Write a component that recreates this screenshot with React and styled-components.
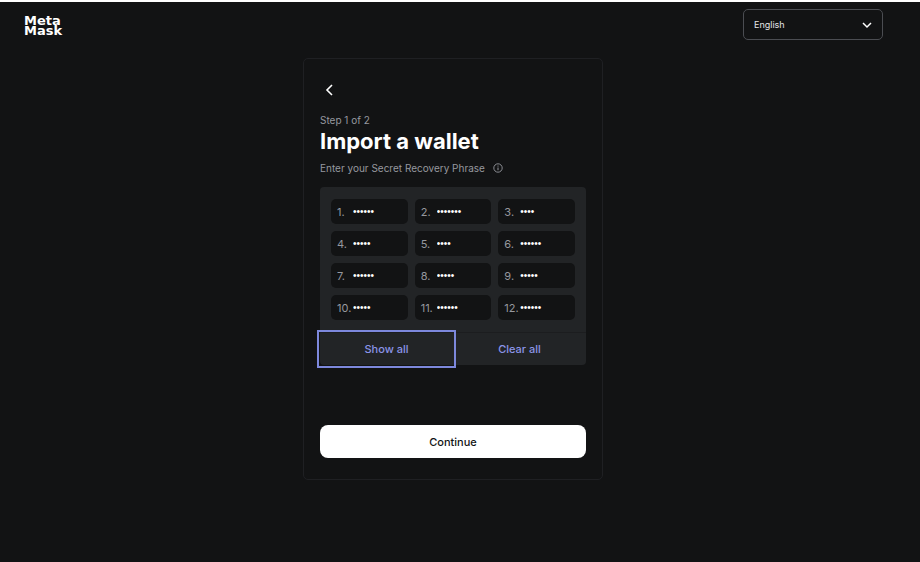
import React, { useState } from 'react';
import styled, { createGlobalStyle } from 'styled-components';

const GlobalStyle = createGlobalStyle`
  * { box-sizing: border-box; }
  html { background: #121314; }
  body {
    margin: 0;
    color: #ffffff;
    font-family: Inter, "Liberation Sans", sans-serif;
    font-size: 11px;
  }
  button, input, select { font: inherit; color: inherit; }
`;

const Page = styled.div`
  min-height: 100vh;
  border-top: 2px solid #ffffff;
  padding: 7px 37px 24px 23px;
  background: #121314;
`;

const Header = styled.header`
  display: flex;
  justify-content: space-between;
  align-items: flex-start;
`;

const Logo = styled.a`
  padding: 7px 0 0 1px;
  color: #ffffff;
  font: 700 13px/10px "DejaVu Sans", sans-serif;
  text-decoration: none;
  white-space: pre-line;
`;

const LanguagePicker = styled.label`
  display: grid;
  grid-template-columns: 1fr 32px;
  align-items: center;
  width: 140px;
  height: 31px;
`;

const LanguageSelect = styled.select`
  grid-area: 1 / 1 / 2 / 3;
  width: 100%;
  height: 100%;
  padding: 0 32px 0 10px;
  appearance: none;
  border: 1px solid #4b4d52;
  border-radius: 5px;
  background: #121314;
  color: #e4e5e7;
  font-size: 9px;
`;

const ChevronDown = styled.svg`
  grid-area: 1 / 2 / 2 / 3;
  width: 12px;
  height: 12px;
  justify-self: center;
  pointer-events: none;
`;

const Card = styled.main`
  width: 300px;
  max-width: 100%;
  margin: 18px auto 0;
  padding: 20px 16px 21px;
  border: 1px solid #1f2023;
  border-radius: 5px;
`;

const BackButton = styled.button`
  display: flex;
  align-items: center;
  justify-content: center;
  width: 18px;
  height: 22px;
  padding: 0;
  border: 0;
  background: none;
`;

const Caption = styled.p`
  display: flex;
  align-items: center;
  gap: 8px;
  margin: 0;
  color: #96989f;
  font-size: 10px;
  line-height: 16px;
`;

const StepBlock = styled.div`
  margin-top: 11px;
`;

const Title = styled.h1`
  margin: 0 0 6px;
  font-size: 22px;
  font-weight: 700;
  line-height: 26px;
`;

const PhrasePanel = styled.section`
  margin-top: 11px;
  border-radius: 4px;
  background: #222426;
`;

const WordGrid = styled.div`
  display: grid;
  grid-template-columns: repeat(3, minmax(0, 1fr));
  gap: 7px;
  padding: 12px 11px;
`;

const WordField = styled.label`
  display: flex;
  align-items: center;
  height: 25px;
  padding: 0 6px;
  border-radius: 5px;
  background: #121314;
`;

const WordNumber = styled.span`
  flex: 0 0 16px;
  color: #96989f;
  white-space: nowrap;
`;

const WordInput = styled.input`
  flex: 1;
  min-width: 0;
  height: 16px;
  padding: 0;
  border: 0;
  outline: 0;
  background: none;
  font-family: "Liberation Sans", sans-serif;
  font-size: 10px;
`;

const PanelActions = styled.div`
  display: grid;
  grid-template-columns: 1fr 1fr;
  border-top: 1px solid #1c1d1f;
`;

const PanelButton = styled.button`
  height: 32px;
  padding: 0;
  border: 0;
  background: none;
  color: #8b94e8;
  font-weight: 500;
  outline: ${(p) => (p.$active ? '2px solid #7d88dc' : 'none')};
  outline-offset: 1px;
`;

const ContinueButton = styled.button`
  display: block;
  width: 100%;
  height: 33px;
  margin-top: 60px;
  border: 0;
  border-radius: 8px;
  background: #ffffff;
  color: #121314;
  font-weight: 500;
`;

const LENGTHS = [6, 7, 4, 5, 4, 6, 6, 5, 5, 5, 6, 6];

export default function App() {
  const [words, setWords] = useState(LENGTHS.map((n) => 'x'.repeat(n)));
  const [shown, setShown] = useState(false);
  const setWord = (i, value) => setWords(words.map((w, j) => (j === i ? value : w)));

  return (
    <Page>
      <GlobalStyle />
      <Header>
        <Logo href="#">{'Meta\nMask'}</Logo>
        <LanguagePicker>
          <LanguageSelect aria-label="Language" defaultValue="English">
            <option>English</option>
          </LanguageSelect>
          <ChevronDown viewBox="0 0 12 12" fill="none" stroke="#ffffff" strokeWidth="1.5">
            <path d="M2 4l4 4 4-4" />
          </ChevronDown>
        </LanguagePicker>
      </Header>

      <Card>
        <BackButton type="button" aria-label="Back">
          <svg width="12" height="12" viewBox="0 0 12 12" fill="none" stroke="#ffffff" strokeWidth="1.6">
            <path d="M9 1L4 6l5 5" />
          </svg>
        </BackButton>
        <StepBlock>
          <Caption>Step 1 of 2</Caption>
          <Title>Import a wallet</Title>
          <Caption>
            Enter your Secret Recovery Phrase
            <svg width="10" height="10" viewBox="0 0 10 10" fill="none" stroke="#96989f">
              <circle cx="5" cy="5" r="4.2" strokeWidth="0.9" />
              <path d="M5 4.5v2.7M5 2.6v1" />
            </svg>
          </Caption>
        </StepBlock>

        <PhrasePanel aria-label="Secret Recovery Phrase">
          <WordGrid>
            {words.map((word, i) => (
              <WordField key={i}>
                <WordNumber>{i + 1}.</WordNumber>
                <WordInput
                  type={shown ? 'text' : 'password'}
                  autoComplete="off"
                  value={word}
                  onChange={(e) => setWord(i, e.target.value)}
                />
              </WordField>
            ))}
          </WordGrid>
          <PanelActions>
            <PanelButton type="button" $active onClick={() => setShown(!shown)}>Show all</PanelButton>
            <PanelButton type="button" onClick={() => setWords(words.map(() => ''))}>Clear all</PanelButton>
          </PanelActions>
        </PhrasePanel>

        <ContinueButton type="button">Continue</ContinueButton>
      </Card>
    </Page>
  );
}
